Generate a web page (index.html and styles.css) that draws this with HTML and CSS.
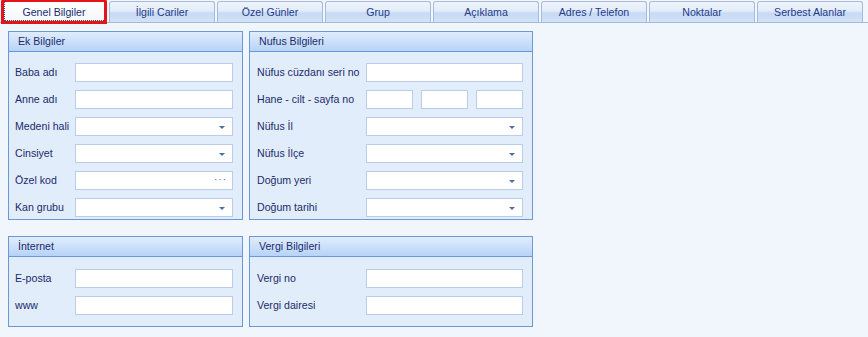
FILE: index.html
```html
<!DOCTYPE html>
<html lang="tr">
<head>
<meta charset="UTF-8">
<title>Genel Bilgiler</title>
<link rel="stylesheet" href="styles.css">
</head>
<body>
<div class="tabs">
  <div class="tab selected"><span>Genel Bilgiler</span></div>
  <div class="tab">İlgili Cariler</div>
  <div class="tab">Özel Günler</div>
  <div class="tab">Grup</div>
  <div class="tab">Açıklama</div>
  <div class="tab">Adres / Telefon</div>
  <div class="tab">Noktalar</div>
  <div class="tab">Serbest Alanlar</div>
</div>

<div class="content">
  <div class="group ek">
    <div class="group-header">Ek Bilgiler</div>
    <div class="group-body">
      <div class="row"><label>Baba adı</label><div class="input"></div></div>
      <div class="row"><label>Anne adı</label><div class="input"></div></div>
      <div class="row"><label>Medeni hali</label><div class="input combo"></div></div>
      <div class="row"><label>Cinsiyet</label><div class="input combo"></div></div>
      <div class="row"><label>Özel kod</label><div class="input dots"></div></div>
      <div class="row"><label>Kan grubu</label><div class="input combo"></div></div>
    </div>
  </div>

  <div class="group nufus">
    <div class="group-header">Nufus Bilgileri</div>
    <div class="group-body">
      <div class="row"><label>Nüfus cüzdanı seri no</label><div class="input"></div></div>
      <div class="row"><label>Hane - cilt - sayfa no</label>
        <div class="split">
          <div class="input"></div>
          <div class="input"></div>
          <div class="input"></div>
        </div>
      </div>
      <div class="row"><label>Nüfus İl</label><div class="input combo"></div></div>
      <div class="row"><label>Nüfus İlçe</label><div class="input combo"></div></div>
      <div class="row"><label>Doğum yeri</label><div class="input combo"></div></div>
      <div class="row"><label>Doğum tarihi</label><div class="input combo"></div></div>
    </div>
  </div>

  <div class="group ek small">
    <div class="group-header">İnternet</div>
    <div class="group-body">
      <div class="row"><label>E-posta</label><div class="input"></div></div>
      <div class="row"><label>www</label><div class="input"></div></div>
    </div>
  </div>

  <div class="group nufus small">
    <div class="group-header">Vergi Bilgileri</div>
    <div class="group-body">
      <div class="row"><label>Vergi no</label><div class="input"></div></div>
      <div class="row"><label>Vergi dairesi</label><div class="input"></div></div>
    </div>
  </div>
</div>
</body>
</html>
```

FILE: styles.css
```css
body {
  margin: 0;
  background-color: #f1f6fd;
  font-family: "Liberation Sans", Arial, sans-serif;
  font-size: 10.6px;
  color: #1b2b6b;
  height: 337px;
  overflow: hidden;
}

/* tab strip */
.tabs {
  display: flex;
  gap: 2px;
  padding: 1px 0 0 1px;
  height: 21px;
  border-bottom: 1px solid #a3badb;
}
.tab {
  width: 106px;
  height: 21px;
  box-sizing: border-box;
  border: 1px solid #a7bcdb;
  border-bottom: none;
  border-radius: 3px 3px 0 0;
  background: linear-gradient(to bottom, #eef4fc 0%, #e3ecf9 45%, #c6daf4 55%, #d3e3f7 100%);
  text-align: center;
  line-height: 21px;
  color: #1e3a8a;
}
.tab.selected {
  position: relative;
  background: linear-gradient(to bottom, #ffffff 0%, #f3f7fd 100%);
  border: 3px solid #e4141b;
  margin-top: -2px;
  height: 25px;
  width: 106px;
  line-height: 20px;
  color: #1b2b6b;
}
.tab.selected::after {
  content: "";
  position: absolute;
  left: 0;
  right: 0;
  top: 0;
  bottom: 0;
  border: 1px dotted #444;
  border-top: none;
  border-right: none;
}

/* group boxes */
.content {
  display: grid;
  grid-template-columns: 235px 284px;
  grid-template-rows: 189px 91px;
  column-gap: 6px;
  row-gap: 16px;
  padding: 8px 0 0 8px;
}
.group {
  border: 1px solid #6b98d6;
  background-color: #e2edfc;
  box-sizing: border-box;
}
.group-header {
  height: 19px;
  line-height: 19px;
  padding-left: 9px;
  border-bottom: 1px solid #6b98d6;
  background: linear-gradient(to bottom, #e0ecfc 0%, #cde0fa 50%, #b6d3f8 100%);
  color: #1b2b6b;
}
.group-body {
  padding: 11px 9px 0 6px;
  display: flex;
  flex-direction: column;
  gap: 9px;
}
.nufus .group-body {
  padding-left: 7px;
}
.small .group-body {
  padding-top: 12px;
}

.row {
  display: flex;
  align-items: center;
  height: 18px;
}
.row label {
  width: 60px;
  flex-shrink: 0;
  white-space: nowrap;
}
.nufus .row label {
  width: 109px;
}

.input {
  flex: 1;
  height: 19px;
  box-sizing: border-box;
  background-color: #ffffff;
  border: 1px solid #b9cde7;
  position: relative;
}
.combo::after {
  content: "";
  position: absolute;
  right: 7px;
  top: 8px;
  border-left: 3px solid transparent;
  border-right: 3px solid transparent;
  border-top: 3px solid #4c6fa5;
}
.dots::after {
  content: "···";
  position: absolute;
  right: 5px;
  top: 0;
  line-height: 16px;
  font-size: 10px;
  color: #4c6fa5;
  letter-spacing: 1px;
}

.split {
  flex: 1;
  display: flex;
  gap: 8px;
}
```
